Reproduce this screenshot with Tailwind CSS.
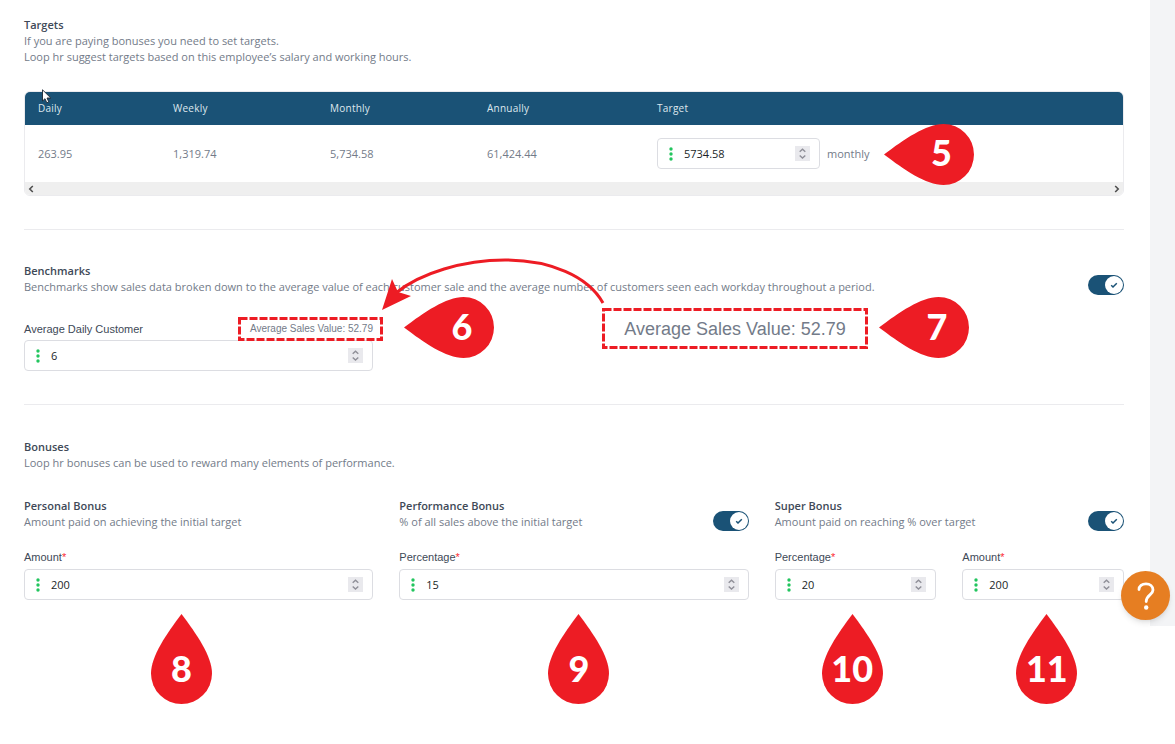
<!DOCTYPE html>
<html lang="en">
<head>
  <meta charset="UTF-8" />
  <meta name="viewport" content="width=device-width, initial-scale=1.0" />
  <title>Targets and Bonuses - Loop hr</title>
  <script src="https://cdn.jsdelivr.net/npm/@tailwindcss/browser@4"></script>
</head>
<body class="min-h-screen bg-white font-['Open_Sans',sans-serif] text-[11px] leading-4 text-[#737b89]">

  <!-- Shared icons -->
  <svg class="hidden">
    <symbol id="dots" viewBox="0 0 4 14">
      <circle cx="2" cy="2" r="1.7" fill="#22c55e" />
      <circle cx="2" cy="7" r="1.7" fill="#22c55e" />
      <circle cx="2" cy="12" r="1.7" fill="#22c55e" />
    </symbol>
    <symbol id="stepper" viewBox="0 0 15 15">
      <path d="M4.7 5.8 7.5 3.2 10.3 5.8M4.7 9.4 7.5 12 10.3 9.4" fill="none" stroke="#8f8f98" stroke-width="1.4" />
    </symbol>
    <symbol id="tick" viewBox="0 0 8 8">
      <path d="M1.2 4.2 3 6 6.8 2.2" fill="none" stroke="#1a5276" stroke-width="1.5" />
    </symbol>
    <symbol id="drop-left" viewBox="0 0 90 61">
      <path d="M0 30.5C20 15.500 42 0 59.500 0A30.500 30.500 0 0 1 59.500 61C42 61 20 45.500 0 30.500Z" fill="#ed1c24" />
    </symbol>
    <symbol id="drop-up" viewBox="0 0 61 90">
      <path d="M30.500 0C45.500 20 61 42 61 59.500A30.500 30.500 0 0 1 0 59.500C0 42 15.500 20 30.500 0Z" fill="#ed1c24" />
    </symbol>
  </svg>

  <div class="relative flex">
    <main class="flex-1 pt-[17px] pr-[26px] pb-[26px] pl-6">

      <!-- Targets -->
      <section>
        <h2 class="font-semibold text-[#404957]">Targets</h2>
        <p>If you are paying bonuses you need to set targets.</p>
        <p>Loop hr suggest targets based on this employee’s salary and working hours.</p>

        <div class="relative mt-[26px]">
          <div class="overflow-hidden rounded-md border border-[#ebebee]">
            <table class="-mt-px w-full text-left">
              <thead class="bg-[#1a5276] text-[10px] tracking-wide text-[#dfe8ee]">
                <tr class="h-[34px]">
                  <th class="w-[134px] pl-[13px] font-normal">Daily</th>
                  <th class="w-[157px] pl-[14px] font-normal">Weekly</th>
                  <th class="w-[157px] pl-[14px] font-normal">Monthly</th>
                  <th class="w-[170px] pl-[14px] font-normal">Annually</th>
                  <th class="pl-[14px] font-normal">Target</th>
                </tr>
              </thead>
              <tbody>
                <tr class="h-[57px]">
                  <td class="pl-[13px]">263.95</td>
                  <td class="pl-[14px]">1,319.74</td>
                  <td class="pl-[14px]">5,734.58</td>
                  <td class="pl-[14px]">61,424.44</td>
                  <td class="pl-[14px]">
                    <div class="flex items-center">
                      <div class="flex h-[31px] w-[163px] items-center rounded border border-[#dcdde2] bg-white pr-[9px] pl-[11px]">
                        <svg class="h-[14px] w-1"><use href="#dots" /></svg>
                        <input type="number" step="any" value="5734.58" aria-label="Target" class="ml-[11px] w-full min-w-0 flex-1 text-[#1b1f27] outline-none [appearance:textfield]" />
                        <button type="button" aria-label="Change target" class="size-[15px] bg-[#e9e9ed]"><svg class="size-[15px]"><use href="#stepper" /></svg></button>
                      </div>
                      <span class="ml-[7px]">monthly</span>
                      <!-- Callout 5 -->
                      <div class="relative ml-[14px] w-0">
                        <div class="absolute -top-[30px] left-0 h-[61px] w-[90px]">
                          <svg class="h-[61px] w-[90px]"><use href="#drop-left" /></svg>
                          <span class="absolute inset-0 flex items-center justify-center pb-1 pl-[26px] font-['Lato',sans-serif] text-[36px] font-black text-white">5</span>
                        </div>
                      </div>
                    </div>
                  </td>
                </tr>
              </tbody>
            </table>
            <div class="flex h-[13px] items-center justify-between bg-[#efefef] px-[3px]">
              <button type="button" aria-label="Scroll left"><svg class="h-2 w-[6px]" viewBox="0 0 6 8"><path d="M4.800 1 1.800 4 4.800 7" fill="none" stroke="#505050" stroke-width="1.600" /></svg></button>
              <button type="button" aria-label="Scroll right"><svg class="h-2 w-[6px]" viewBox="0 0 6 8"><path d="M1.200 1 4.200 4 1.200 7" fill="none" stroke="#505050" stroke-width="1.600" /></svg></button>
            </div>
          </div>
          <!-- Mouse pointer -->
          <svg class="absolute -top-[2px] left-[18px] h-[15px] w-[10px]" viewBox="0 0 10 15">
            <path d="M.5.8V12L3 9.700 4.800 13.800 6.800 12.900 5 9H8.800Z" fill="#fff" stroke="#1c2530" stroke-width=".9" />
          </svg>
        </div>
      </section>

      <hr class="mt-[33px] border-[#ebebee]" />

      <!-- Benchmarks -->
      <section class="relative mt-8">
        <div class="flex items-center justify-between">
          <div>
            <h2 class="font-semibold text-[#404957]">Benchmarks</h2>
            <p>Benchmarks show sales data broken down to the average value of each customer sale and the average number of customers seen each workday throughout a period.</p>
          </div>
          <label class="relative mt-[13px] h-5 w-9 shrink-0">
            <input type="checkbox" checked aria-label="Benchmarks" class="h-5 w-9 appearance-none rounded-full bg-[#1a5276]" />
            <span class="absolute top-px right-px flex size-[18px] items-center justify-center rounded-full bg-white"><svg class="size-2"><use href="#tick" /></svg></span>
          </label>
        </div>

        <div class="mt-[26px] w-[349px]">
          <div class="flex items-center justify-between font-['Liberation_Sans',sans-serif]">
            <label for="customers" class="text-[#404957]">Average Daily Customer</label>
            <span class="relative text-[10px]">
              Average Sales Value: 52.79
              <svg class="absolute -top-[4px] -right-[10px] h-6 w-[145px]"><rect x="1.500" y="1.500" width="142" height="21" fill="none" stroke="#ed1c24" stroke-width="3" stroke-dasharray="8 2" /></svg>
            </span>
          </div>
          <div class="mt-[3px] flex h-[31px] items-center rounded border border-[#dcdde2] bg-white pr-[9px] pl-[11px]">
            <svg class="h-[14px] w-1"><use href="#dots" /></svg>
            <input id="customers" type="number" value="6" class="ml-[11px] min-w-0 flex-1 text-[#1b1f27] outline-none [appearance:textfield]" />
            <button type="button" aria-label="Change average daily customer" class="size-[15px] bg-[#e9e9ed]"><svg class="size-[15px]"><use href="#stepper" /></svg></button>
          </div>
        </div>

        <!-- Arrow between the two value boxes -->
        <svg class="absolute -top-[6px] left-[356px] h-[56px] w-[228px]" viewBox="380 256 228 56">
          <path d="M396 293C420 273 464 260 505 260C550 260 588 276 603 303" fill="none" stroke="#ed1c24" stroke-width="3" />
          <path d="M382 310 392 279 398 292 411 296Z" fill="#ed1c24" />
        </svg>
        <!-- Callout 6 -->
        <div class="absolute top-[35px] left-[380px] h-[61px] w-[90px]">
          <svg class="h-[61px] w-[90px]"><use href="#drop-left" /></svg>
          <span class="absolute inset-0 flex items-center justify-center pb-1 pl-[26px] font-['Lato',sans-serif] text-[36px] font-black text-white">6</span>
        </div>
        <!-- Enlarged value -->
        <div class="absolute top-[46px] left-[578px] flex h-[41px] w-[266px] items-center justify-center bg-white font-['Liberation_Sans',sans-serif] text-[18px]">
          Average Sales Value: 52.79
          <svg class="absolute inset-0 h-[41px] w-[266px]"><rect x="1.500" y="1.500" width="263" height="38" fill="none" stroke="#ed1c24" stroke-width="3" stroke-dasharray="8 2" /></svg>
        </div>
        <!-- Callout 7 -->
        <div class="absolute top-[35px] left-[855px] h-[61px] w-[90px]">
          <svg class="h-[61px] w-[90px]"><use href="#drop-left" /></svg>
          <span class="absolute inset-0 flex items-center justify-center pb-1 pl-[26px] font-['Lato',sans-serif] text-[36px] font-black text-white">7</span>
        </div>
      </section>

      <hr class="mt-[33px] border-[#ebebee]" />

      <!-- Bonuses -->
      <section class="mt-[34px]">
        <h2 class="font-semibold text-[#404957]">Bonuses</h2>
        <p>Loop hr bonuses can be used to reward many elements of performance.</p>

        <div class="mt-[27px] grid grid-cols-3 gap-[26px]">
          <!-- Personal -->
          <div>
            <h3 class="font-semibold text-[#404957]">Personal Bonus</h3>
            <p>Amount paid on achieving the initial target</p>
            <div class="relative mt-[19px]">
              <label for="personal" class="block font-['Liberation_Sans',sans-serif] text-[#404957]">Amount<span class="text-red-500">*</span></label>
              <div class="mt-1 flex h-[31px] items-center rounded border border-[#dcdde2] bg-white pr-[9px] pl-[11px]">
                <svg class="h-[14px] w-1"><use href="#dots" /></svg>
                <input id="personal" type="number" value="200" required class="ml-[11px] min-w-0 flex-1 text-[#1b1f27] outline-none [appearance:textfield]" />
                <button type="button" aria-label="Change personal amount" class="size-[15px] bg-[#e9e9ed]"><svg class="size-[15px]"><use href="#stepper" /></svg></button>
              </div>
              <!-- Callout 8 -->
              <div class="absolute top-[65px] left-[127px] h-[90px] w-[61px]">
                <svg class="h-[90px] w-[61px]"><use href="#drop-up" /></svg>
                <span class="absolute inset-0 flex items-center justify-center pt-[18px] font-['Lato',sans-serif] text-[36px] font-black text-white">8</span>
              </div>
            </div>
          </div>

          <!-- Performance -->
          <div>
            <div class="flex items-center justify-between">
              <div>
                <h3 class="font-semibold text-[#404957]">Performance Bonus</h3>
                <p>% of all sales above the initial target</p>
              </div>
              <label class="relative mt-[13px] -mb-px h-5 w-9 shrink-0">
                <input type="checkbox" checked aria-label="Performance Bonus" class="h-5 w-9 appearance-none rounded-full bg-[#1a5276]" />
                <span class="absolute top-px right-px flex size-[18px] items-center justify-center rounded-full bg-white"><svg class="size-2"><use href="#tick" /></svg></span>
              </label>
            </div>
            <div class="relative mt-[19px]">
              <label for="performance" class="block font-['Liberation_Sans',sans-serif] text-[#404957]">Percentage<span class="text-red-500">*</span></label>
              <div class="mt-1 flex h-[31px] items-center rounded border border-[#dcdde2] bg-white pr-[9px] pl-[11px]">
                <svg class="h-[14px] w-1"><use href="#dots" /></svg>
                <input id="performance" type="number" value="15" required class="ml-[11px] min-w-0 flex-1 text-[#1b1f27] outline-none [appearance:textfield]" />
                <button type="button" aria-label="Change performance percentage" class="size-[15px] bg-[#e9e9ed]"><svg class="size-[15px]"><use href="#stepper" /></svg></button>
              </div>
              <!-- Callout 9 -->
              <div class="absolute top-[65px] left-[149px] h-[90px] w-[61px]">
                <svg class="h-[90px] w-[61px]"><use href="#drop-up" /></svg>
                <span class="absolute inset-0 flex items-center justify-center pt-[18px] font-['Lato',sans-serif] text-[36px] font-black text-white">9</span>
              </div>
            </div>
          </div>

          <!-- Super -->
          <div>
            <div class="flex items-center justify-between">
              <div>
                <h3 class="font-semibold text-[#404957]">Super Bonus</h3>
                <p>Amount paid on reaching % over target</p>
              </div>
              <label class="relative mt-[13px] -mb-px h-5 w-9 shrink-0">
                <input type="checkbox" checked aria-label="Super Bonus" class="h-5 w-9 appearance-none rounded-full bg-[#1a5276]" />
                <span class="absolute top-px right-px flex size-[18px] items-center justify-center rounded-full bg-white"><svg class="size-2"><use href="#tick" /></svg></span>
              </label>
            </div>
            <div class="mt-[19px] grid grid-cols-2 gap-[26px]">
              <div class="relative">
                <label for="superPercent" class="block font-['Liberation_Sans',sans-serif] text-[#404957]">Percentage<span class="text-red-500">*</span></label>
                <div class="mt-1 flex h-[31px] items-center rounded border border-[#dcdde2] bg-white pr-[9px] pl-[11px]">
                  <svg class="h-[14px] w-1"><use href="#dots" /></svg>
                  <input id="superPercent" type="number" value="20" required class="ml-[11px] min-w-0 flex-1 text-[#1b1f27] outline-none [appearance:textfield]" />
                  <button type="button" aria-label="Change super percentage" class="size-[15px] bg-[#e9e9ed]"><svg class="size-[15px]"><use href="#stepper" /></svg></button>
                </div>
                <!-- Callout 10 -->
                <div class="absolute top-[65px] left-[47px] h-[90px] w-[61px]">
                  <svg class="h-[90px] w-[61px]"><use href="#drop-up" /></svg>
                  <span class="absolute inset-0 flex items-center justify-center pt-[18px] font-['Lato',sans-serif] text-[36px] font-black text-white">10</span>
                </div>
              </div>
              <div class="relative">
                <label for="superAmount" class="block font-['Liberation_Sans',sans-serif] text-[#404957]">Amount<span class="text-red-500">*</span></label>
                <div class="mt-1 flex h-[31px] items-center rounded border border-[#dcdde2] bg-white pr-[9px] pl-[11px]">
                  <svg class="h-[14px] w-1"><use href="#dots" /></svg>
                  <input id="superAmount" type="number" value="200" required class="ml-[11px] min-w-0 flex-1 text-[#1b1f27] outline-none [appearance:textfield]" />
                  <button type="button" aria-label="Change super amount" class="size-[15px] bg-[#e9e9ed]"><svg class="size-[15px]"><use href="#stepper" /></svg></button>
                </div>
                <!-- Callout 11 -->
                <div class="absolute top-[65px] left-[54px] h-[90px] w-[61px]">
                  <svg class="h-[90px] w-[61px]"><use href="#drop-up" /></svg>
                  <span class="absolute inset-0 flex items-center justify-center pt-[18px] font-['Lato',sans-serif] text-[36px] font-black text-white">11</span>
                </div>
              </div>
            </div>
          </div>
        </div>
      </section>
    </main>

    <div class="w-[25px] bg-[#f3f4f6]"></div>

    <!-- Help -->
    <button type="button" aria-label="Help" class="absolute right-[5px] bottom-[6px] flex size-[49px] items-center justify-center rounded-full bg-[#e67e22] shadow-md">
      <svg class="h-[28px] w-[18px]" viewBox="0 0 18 28">
        <path d="M2 7.500C2 4 5 1.800 9 1.800S16 4.200 16 8C16 13 9.200 13 9.200 19.500" fill="none" stroke="#fff" stroke-width="2.800" stroke-linecap="round" />
        <circle cx="9.200" cy="25.500" r="2.200" fill="#fff" />
      </svg>
    </button>
  </div>
</body>
</html>
